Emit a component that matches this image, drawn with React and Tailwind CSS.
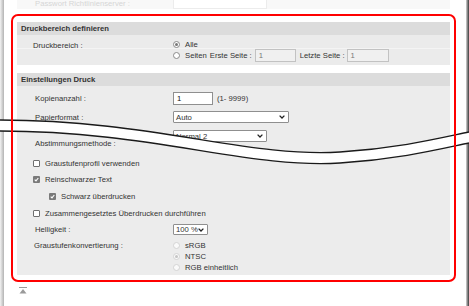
import React from 'react';

const Radio = ({ checked, faded }) => (
  <span
    className={
      faded
        ? 'w-[7px] h-[7px] shrink-0 rounded-full border border-[#d4d4d4] bg-[#fafafa] flex items-center justify-center'
        : 'w-[7px] h-[7px] shrink-0 rounded-full border border-[#8a8a8a] bg-white flex items-center justify-center'
    }
  >
    {checked && (
      <span className={faded ? 'w-[3px] h-[3px] rounded-full bg-[#c4c4c4]' : 'w-[3px] h-[3px] rounded-full bg-[#777]'} />
    )}
  </span>
);

const Checkbox = ({ checked }) =>
  checked ? (
    <span className="w-[7px] h-[7px] shrink-0 rounded-[1px] bg-[#7a7a7a] flex items-center justify-center">
      <svg width="5" height="5" viewBox="0 0 5 5">
        <path d="M0.7 2.6 L2 3.9 L4.3 1" stroke="#fff" strokeWidth="1.1" fill="none" />
      </svg>
    </span>
  ) : (
    <span className="w-[7px] h-[7px] shrink-0 rounded-[1px] border border-[#6f6f6f] bg-white" />
  );

const Select = ({ w, children }) => (
  <div className={`${w} h-full bg-white border border-[#8f8f8f] rounded-[1px] flex items-center justify-between pl-[2px] pr-[3px]`}>
    <span>{children}</span>
    <svg width="6" height="4" viewBox="0 0 6 4">
      <path d="M0.6 0.6 L3 3 L5.4 0.6" stroke="#222" strokeWidth="1.3" fill="none" />
    </svg>
  </div>
);

const CheckRow = ({ checked, indent, mt, children }) => (
  <div className={`flex items-center h-[12px] ${mt} ${indent ? 'pl-[32px]' : 'pl-[16px]'}`}>
    <Checkbox checked={checked} />
    <span className="ml-[5px]">{children}</span>
  </div>
);

export default function App() {
  return (
    <div className="relative w-[469px] h-[306px] overflow-hidden bg-white font-['Liberation_Sans',Arial,sans-serif] text-[7.7px] leading-[11px] text-[#333] flex">
      <div className="w-[4px] h-full shrink-0 bg-gradient-to-r from-[#f3f3f3] to-[#b3b3b3]" />

      <div className="flex-1 flex flex-col">
        {/* faded previous row */}
        <div className="ml-[13px] w-[433px] h-[9px] bg-[#f8f8f8] flex overflow-hidden">
          <div className="w-[156px] shrink-0 pl-[18px] leading-[9px] -mt-[1px] text-[#d6d6d6]">Passwort Richtlinienserver :</div>
          <div className="w-[94px] h-[9px] bg-white border border-t-0 border-[#ececec]" />
        </div>

        <div className="relative ml-[7px] mt-[5px] w-[445px] h-[268px] px-[6px] pt-[8px] pb-[7px] flex flex-col">
          <div className="absolute inset-0 border-2 border-[#ff0000] rounded-[7px] z-20 pointer-events-none" />

          {/* Druckbereich */}
          <div className="h-[13px] bg-[#dcdcdc] pl-[4px] font-bold flex items-center">Druckbereich definieren</div>
          <div className="h-[30px] bg-[#ebebeb]">
            <div className="h-[14px] flex border-b border-[#f4f4f4]">
              <div className="w-[156px] shrink-0 pl-[16px] pt-[5px]">Druckbereich :</div>
              <div className="flex items-center gap-[5px] pt-[5px] h-full">
                <Radio checked />
                <span>Alle</span>
              </div>
            </div>
            <div className="flex">
              <div className="w-[156px] shrink-0" />
              <div className="flex items-center h-[13px]">
                <Radio />
                <span className="ml-[5px]">Seiten</span>
                <span className="ml-[3px]">Erste Seite :</span>
                <div className="ml-[3px] w-[41px] h-[13px] bg-[#f0f0f0] border border-[#c2c2c2] pl-[3px] flex items-center text-[#777]">1</div>
                <span className="ml-[4px]">Letzte Seite :</span>
                <div className="ml-[2px] w-[42px] h-[13px] bg-[#f0f0f0] border border-[#c2c2c2] pl-[3px] flex items-center text-[#777]">1</div>
              </div>
            </div>
          </div>

          {/* Einstellungen Druck */}
          <div className="mt-[8px] h-[13px] bg-[#dcdcdc] pl-[4px] font-bold flex items-center">Einstellungen Druck</div>
          <div className="flex-1 bg-[#ececec] flex flex-col">
            <div className="mt-[6px] h-[13px] flex items-center">
              <div className="w-[156px] shrink-0 pl-[18px]">Kopienanzahl :</div>
              <div className="w-[40px] h-[13px] bg-white border border-[#8f8f8f] pl-[3px] flex items-center text-[#111]">1</div>
              <span className="ml-[4px]">(1- 9999)</span>
            </div>
            <div className="mt-[6px] h-[12px] flex items-center">
              <div className="w-[156px] shrink-0 pl-[18px]">Papierformat :</div>
              <Select w="w-[116px]">Auto</Select>
            </div>
            <div className="mt-[7px] h-[16px] flex items-start">
              <div className="w-[156px] shrink-0 pl-[18px] mt-[8px]">Abstimmungsmethode :</div>
              <div className="h-[12px]">
                <Select w="w-[94px]">Normal 2</Select>
              </div>
            </div>

            <CheckRow mt="mt-[11px]">Graustufenprofil verwenden</CheckRow>
            <CheckRow mt="mt-[4px]" checked>Reinschwarzer Text</CheckRow>
            <CheckRow mt="mt-[5px]" checked indent>Schwarz überdrucken</CheckRow>
            <CheckRow mt="mt-[5px]">Zusammengesetztes Überdrucken durchführen</CheckRow>

            <div className="mt-[5px] h-[11px] flex items-center">
              <div className="w-[156px] shrink-0 pl-[18px]">Helligkeit :</div>
              <Select w="w-[35px]">100 %</Select>
            </div>

            <div className="mt-[5px] flex">
              <div className="w-[156px] shrink-0 pl-[17px]">Graustufenkonvertierung :</div>
              <div className="flex flex-col">
                <div className="h-[11px] flex items-center gap-[5px]"><Radio faded /><span>sRGB</span></div>
                <div className="h-[11px] flex items-center gap-[5px]"><Radio faded checked /><span>NTSC</span></div>
                <div className="h-[11px] flex items-center gap-[5px]"><Radio faded /><span>RGB einheitlich</span></div>
              </div>
            </div>
          </div>
        </div>

        <div className="ml-[15px] mt-[5px]">
          <svg width="8" height="7" viewBox="0 0 8 7">
            <rect x="0" y="0" width="8" height="1" fill="#9a9a9a" />
            <path d="M4 2 L7.5 6.5 L0.5 6.5 Z" fill="#9a9a9a" />
          </svg>
        </div>
      </div>

      <div className="w-[3px] h-full shrink-0 bg-gradient-to-r from-[#d6d6d6] to-[#3c3c3c]" />

      {/* page break marks */}
      <svg className="absolute left-0 top-0 z-10 pointer-events-none" width="469" height="306" viewBox="0 0 469 306">
        <path
          d="M0,120 C150,120 250,158 340,152 C400,148 440,138 469,132 L469,143 C440,149 400,159 340,163 C250,169 150,131 0,131 Z"
          fill="#fff"
        />
        <path d="M0,120 C150,120 250,158 340,152 C400,148 440,138 469,132" stroke="#1a1a1a" strokeWidth="1.3" fill="none" />
        <path d="M0,131 C150,131 250,169 340,163 C400,159 440,149 469,143" stroke="#1a1a1a" strokeWidth="1.3" fill="none" />
      </svg>
    </div>
  );
}
